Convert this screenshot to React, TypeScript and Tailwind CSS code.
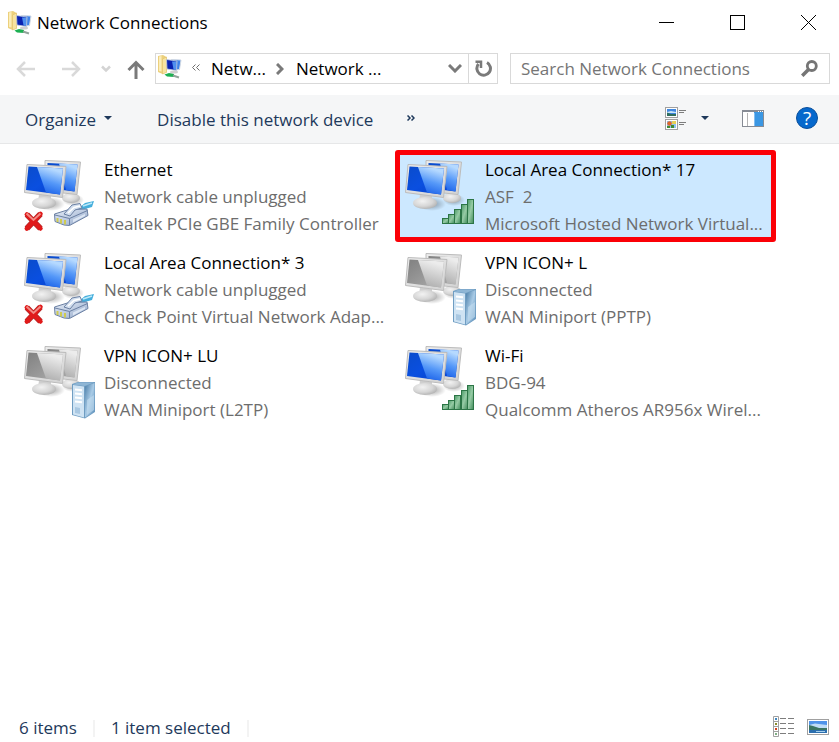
import React, { useState } from 'react';

type Badge = 'cable' | 'signal' | 'server';

interface Connection {
    name: string;
    status: string;
    device: string;
    badge: Badge;
}

const connections: Connection[] = [
    { name: 'Ethernet', status: 'Network cable unplugged', device: 'Realtek PCIe GBE Family Controller', badge: 'cable' },
    { name: 'Local Area Connection* 17', status: 'ASF  2', device: 'Microsoft Hosted Network Virtual...', badge: 'signal' },
    { name: 'Local Area Connection* 3', status: 'Network cable unplugged', device: 'Check Point Virtual Network Adap...', badge: 'cable' },
    { name: 'VPN ICON+ L', status: 'Disconnected', device: 'WAN Miniport (PPTP)', badge: 'server' },
    { name: 'VPN ICON+ LU', status: 'Disconnected', device: 'WAN Miniport (L2TP)', badge: 'server' },
    { name: 'Wi-Fi', status: 'BDG-94', device: 'Qualcomm Atheros AR956x Wirel...', badge: 'signal' },
];

// Gradients shared by every connection icon
function IconDefs() {
    return (
        <svg width="0" height="0" className="absolute" aria-hidden="true">
            <defs>
                <linearGradient id="blue-screen" x1="0" y1="0" x2="1" y2="1">
                    <stop offset="0" stopColor="#0a4ccb" />
                    <stop offset="0.5" stopColor="#0a4fe0" />
                    <stop offset="1" stopColor="#063fc8" />
                </linearGradient>
                <linearGradient id="blue-shine" x1="0.3" y1="0" x2="0" y2="1">
                    <stop offset="0" stopColor="#b5d9ff" />
                    <stop offset="0.45" stopColor="#5598f8" />
                    <stop offset="1" stopColor="#0d55e6" />
                </linearGradient>
                <linearGradient id="gray-screen" x1="0" y1="0" x2="1" y2="1">
                    <stop offset="0" stopColor="#808080" />
                    <stop offset="1" stopColor="#adadad" />
                </linearGradient>
                <linearGradient id="gray-shine" x1="0.3" y1="0" x2="0" y2="1">
                    <stop offset="0" stopColor="#ececec" />
                    <stop offset="1" stopColor="#a6a6a6" />
                </linearGradient>
                <linearGradient id="case" x1="0" y1="0" x2="1" y2="1">
                    <stop offset="0" stopColor="#ededed" />
                    <stop offset="1" stopColor="#d2d2d2" />
                </linearGradient>
                <radialGradient id="stand" cx="0.4" cy="0.35" r="0.7">
                    <stop offset="0" stopColor="#f2f2f2" />
                    <stop offset="0.6" stopColor="#d6d6d6" />
                    <stop offset="1" stopColor="#b0b0b0" />
                </radialGradient>
                <radialGradient id="shadow">
                    <stop offset="0" stopColor="#000" stopOpacity="0.35" />
                    <stop offset="1" stopColor="#000" stopOpacity="0" />
                </radialGradient>
                <linearGradient id="bar" x1="0" y1="0" x2="1" y2="1">
                    <stop offset="0" stopColor="#4c9a68" />
                    <stop offset="0.5" stopColor="#96cba5" />
                    <stop offset="1" stopColor="#3f8a59" />
                </linearGradient>
                <linearGradient id="server-side" x1="0" y1="0" x2="1" y2="1">
                    <stop offset="0" stopColor="#4b7ea8" />
                    <stop offset="0.5" stopColor="#a9cbe6" />
                    <stop offset="1" stopColor="#568bb7" />
                </linearGradient>
                <linearGradient id="plug" x1="0" y1="0" x2="1" y2="1">
                    <stop offset="0" stopColor="#e6edf7" />
                    <stop offset="1" stopColor="#93a8ca" />
                </linearGradient>
            </defs>
        </svg>
    );
}

function CableBadge() {
    return (
        <g>
            <path d="M56 50 L62 45 L71 43 L69 49 L62 51 L58 54 Z" fill="#45aedc" />
            <path d="M60 48 L69 45" stroke="#bde9f9" strokeWidth="1.5" />
            <path d="M31.500 56 L46 51.500 L64 51 L65 57.500 L46.500 67.500 L41 67 L32 63.500 Z" fill="url(#plug)" stroke="#6b80a3" strokeWidth="1" />
            <path d="M41 56 L49 47 L57 45.500 L59 50 L52 52 L47 58 Z" fill="#d3dfef" stroke="#6b80a3" strokeWidth="1" />
            <path d="M45 55 L51 49.500 L57 48" stroke="#fff" strokeWidth="1.5" />
            <path d="M46.500 60.500 L64.500 52.500 M46.500 60.500 V67 M32 57 L46.500 60.500" stroke="#6b80a3" strokeWidth="1" />
            <path d="M34.500 60 V64 M38 61 V65.500 M42 62 V66.500" stroke="#cfcb52" strokeWidth="2" />
            <path d="M50 61.500 L62 56 V58 L50 64.500 Z" fill="#dbe5f3" />
            <path d="M3.800 56.500 L17.500 70.500 M17.500 56 L3.800 70.500" stroke="#b52828" strokeWidth="6" />
            <path d="M3.800 56.500 L17.500 70.500 M17.500 56 L3.800 70.500" stroke="#e01a1a" strokeWidth="4.500" strokeLinecap="round" />
            <path d="M3.500 55.500 L10.500 62 L17.500 55.500" stroke="#f28a84" strokeWidth="2" />
        </g>
    );
}

function SignalBadge() {
    return (
        <g fill="url(#bar)" stroke="#2c7546" strokeWidth="1">
            <rect x="38.500" y="60.500" width="6" height="5" />
            <rect x="44.500" y="56.500" width="6" height="9" />
            <rect x="50.500" y="51.500" width="6" height="14" />
            <rect x="57.500" y="46.500" width="6" height="19" />
            <rect x="63.500" y="41.500" width="6" height="24" />
        </g>
    );
}

function ServerBadge() {
    return (
        <g>
            <path d="M49 40 L55 38 H72 V68 L62 74.500 L49 71 Z" fill="#6f9dc2" />
            <path d="M50 41 L61 42.500 V73.500 L50 70.500 Z" fill="#cfe3f3" />
            <path d="M62 42.500 L71.500 39 V67.500 L62 73.500 Z" fill="url(#server-side)" />
            <path d="M50 40.500 L55 38.500 H71 L61.500 42 Z" fill="#8fb6d5" />
            <path d="M52 45.500 L59 46.300 M52 49.500 L59 50.300 M52 53.500 L59 54.300 M52 57.500 L59 58.300" stroke="#fff" strokeWidth="2" />
            <path d="M52 63 L57 64 V70 L52 69 Z" fill="#a9c8e2" />
            <path d="M64 56 L71 51 V66 L64 71 Z" fill="#c5def0" opacity="0.6" />
        </g>
    );
}

function ConnectionIcon({ badge }: { badge: Badge }) {
    const off = badge === 'server';
    const screen = off ? 'url(#gray-screen)' : 'url(#blue-screen)';
    const shine = off ? 'url(#gray-shine)' : 'url(#blue-shine)';
    return (
        <svg viewBox="0 0 73 78" fill="none" className="mt-[3px] h-[78px] w-[73px] shrink-0" aria-hidden="true">
            <ellipse cx="50" cy="42" rx="11" ry="6" fill="url(#shadow)" />
            <ellipse cx="48" cy="40" rx="9" ry="5" fill="url(#stand)" />
            <path d="M22 2.500 L57.500 4 L54 36.500 L22 33 Z" fill="url(#case)" stroke="#bcbcbc" strokeWidth="1" />
            <path d="M24.500 5 L54.500 6.500 L51.500 33.500 L24 30 Z" fill={screen} />
            <path d="M36 5.500 L54.500 6.500 L51.500 33.500 L43 32 Z" fill={shine} />
            <ellipse cx="28" cy="46" rx="14" ry="7" fill="url(#shadow)" />
            <path d="M16 36 L28 38 L28 45 L15 45 Z" fill="#cfcfcf" />
            <ellipse cx="21" cy="45" rx="12" ry="6" fill="url(#stand)" />
            <path d="M4 6.500 L43 8.500 L39.500 39.500 L1.500 34.500 Z" fill="url(#case)" stroke="#bcbcbc" strokeWidth="1" />
            <path d="M5.500 8.500 L40 10.500 L37 36.500 L3 32 Z" fill={screen} />
            <path d="M14 9 L40 10.500 L37 36.500 L23 34.500 Z" fill={shine} />
            {badge === 'cable' && <CableBadge />}
            {badge === 'signal' && <SignalBadge />}
            {badge === 'server' && <ServerBadge />}
        </svg>
    );
}

function FolderIcon() {
    return (
        <svg viewBox="0 0 24 24" className="h-6 w-6 shrink-0" aria-hidden="true">
            <path d="M0 1 L5 0 L8.500 2 V17 L4.500 19 L0 17 Z" fill="#ecd07c" />
            <path d="M1 1.500 L3.500 1 V16.500 L1 16 Z" fill="#fbedb9" />
            <path d="M4.500 4 L8.500 2 V17.500 L4.500 19 Z" fill="#f7e3a0" stroke="#dfbf68" strokeWidth="0.600" />
            <path d="M13 4.500 L23 5 L21.500 14.500 L18 15 Z" fill="#3f82e8" stroke="#d3dae3" />
            <path d="M8.500 4.500 L19 6 L18.500 15.500 L9 14 Z" fill="#0a22b0" />
            <path d="M14 6.500 L19 6.500 L18.500 15 L15.500 14.500 Z" fill="#4f8fee" />
            <path d="M8.500 4.500 L19 6 L18.500 15.500 L9 14 Z" fill="none" stroke="#c9d3df" strokeWidth="0.800" />
            <ellipse cx="16" cy="17" rx="4" ry="1.500" fill="#d0d0d0" />
            <path d="M6.500 19.500 L11 18 L16 19 L16 22 L9 21.500 Z" fill="#1cb052" />
            <path d="M15 20.500 L21 22.500" stroke="#93a39b" strokeWidth="2" />
        </svg>
    );
}

function TitleBar() {
    return (
        <header className="flex h-[45px] items-center justify-between pl-2">
            <div className="flex items-center gap-[5px]">
                <FolderIcon />
                <h1 className="text-[17px] leading-6 text-black">Network Connections</h1>
            </div>
            <div className="flex gap-[9px]">
                <button type="button" aria-label="Minimize" className="flex h-[43px] w-[62px] items-center justify-center hover:bg-gray-200">
                    <svg viewBox="0 0 15 15" className="h-[15px] w-[15px]" stroke="#000"><path d="M0 7.500 H15" /></svg>
                </button>
                <button type="button" aria-label="Maximize" className="flex h-[43px] w-[62px] items-center justify-center hover:bg-gray-200">
                    <svg viewBox="0 0 15 15" className="h-[15px] w-[15px]" fill="none" stroke="#000"><rect x="0.500" y="0.500" width="14" height="14" /></svg>
                </button>
                <button type="button" aria-label="Close" className="flex h-[43px] w-[62px] items-center justify-center hover:bg-red-500">
                    <svg viewBox="0 0 15 15" className="h-[15px] w-[15px]" stroke="#000"><path d="M0 0 L15 15 M15 0 L0 15" /></svg>
                </button>
            </div>
        </header>
    );
}

function AddressRow() {
    const [query, setQuery] = useState('');
    return (
        <div className="flex h-[50px] items-start pt-2 pr-[9px]">
            <nav aria-label="History" className="flex h-[31px] w-[155px] shrink-0 items-center pt-px pl-4">
                <button type="button" aria-label="Back" className="mr-[27px]">
                    <svg viewBox="0 0 19 16" className="h-4 w-[19px]" fill="none" stroke="#d9d9d9" strokeWidth="2.500"><path d="M19 8 H2 M9 1 L2 8 L9 15" /></svg>
                </button>
                <button type="button" aria-label="Forward" className="mr-5">
                    <svg viewBox="0 0 19 16" className="h-4 w-[19px]" fill="none" stroke="#d9d9d9" strokeWidth="2.500"><path d="M0 8 H17 M10 1 L17 8 L10 15" /></svg>
                </button>
                <button type="button" aria-label="Recent locations" className="mr-4">
                    <svg viewBox="0 0 10 8" className="h-2 w-[10px]" fill="none" stroke="#d4d4d4" strokeWidth="2.500"><path d="M1 1.500 L5 5.500 L9 1.500" /></svg>
                </button>
                <button type="button" aria-label="Up">
                    <svg viewBox="0 0 18 19" className="h-[19px] w-[18px]" fill="none" stroke="#7a7a7a" strokeWidth="3"><path d="M9 19 V3 M1.500 10 L9 2.500 L16.500 10" /></svg>
                </button>
            </nav>
            <div className="flex h-[31px] flex-1 items-center border border-[#d9d9d9] text-[17px] text-black">
                <span className="ml-[2px] flex h-full items-start pt-px">
                    <FolderIcon />
                </span>
                <svg viewBox="0 0 8 7" className="mb-[3px] ml-[10px] h-[7px] w-2" fill="none" stroke="#6d6d6d"><path d="M3.500 0.500 L0.500 3.500 L3.500 6.500 M7.500 0.500 L4.500 3.500 L7.500 6.500" /></svg>
                <button type="button" className="ml-[11px]">Netw...</button>
                <svg viewBox="0 0 8 12" className="ml-[10px] h-3 w-2" fill="none" stroke="#7a7a7a" strokeWidth="3"><path d="M1 1 L6 6 L1 11" /></svg>
                <button type="button" className="ml-3">Network ...</button>
                <button type="button" aria-label="Previous locations" className="mr-[6px] ml-auto">
                    <svg viewBox="0 0 14 9" className="h-[9px] w-[14px]" fill="none" stroke="#7a7a7a" strokeWidth="3"><path d="M1 1 L7 7 L13 1" /></svg>
                </button>
                <button type="button" aria-label="Refresh" className="flex h-full w-[29px] items-center justify-center border-l border-[#d9d9d9]">
                    <svg viewBox="0 0 17 17" className="h-[17px] w-[17px]" fill="none" stroke="#7a7a7a" strokeWidth="3">
                        <path d="M12 2.500 A6.800 6.800 0 1 1 3.500 4" />
                        <path d="M0.500 1.800 H6 V8" strokeWidth="2.500" />
                    </svg>
                </button>
            </div>
            <div role="search" className="ml-3 flex h-[31px] w-[320px] shrink items-center border border-[#d9d9d9] pr-[11px] pl-[10px]">
                <input
                    type="text"
                    aria-label="Search Network Connections"
                    value={query}
                    onChange={(e) => setQuery(e.target.value)}
                    placeholder="Search Network Connections"
                    className="h-full min-w-0 flex-1 text-[17px] leading-7 outline-none placeholder:text-[#757575]"
                />
                <svg viewBox="0 0 17 17" className="h-[17px] w-[17px]" fill="none" stroke="#757575">
                    <circle cx="10.800" cy="6" r="4.500" strokeWidth="2.800" />
                    <path d="M7.500 9.500 L1.200 15.800" strokeWidth="3.500" />
                </svg>
            </div>
        </div>
    );
}

function Toolbar() {
    return (
        <div className="flex h-[49px] items-center border-b border-[#e6e7e8] bg-[#f5f6f7] pt-px pr-[21px] pl-[25px] text-[17px] text-[#1e395b]">
            <button type="button" className="flex items-center gap-2">
                Organize
                <svg viewBox="0 0 8 4" className="mb-1 h-1 w-2" fill="#1e395b"><path d="M0 0 H8 L4 4 Z" /></svg>
            </button>
            <button type="button" className="ml-[45px]">Disable this network device</button>
            <button type="button" aria-label="More commands" className="mb-1 ml-[34px]">
                <svg viewBox="0 0 8 6" className="h-[6px] w-2" fill="none" stroke="#1e395b" strokeWidth="1.500"><path d="M0.500 0.500 L3 3 L0.500 5.500 M4.500 0.500 L7 3 L4.500 5.500" /></svg>
            </button>
            <div className="ml-auto flex items-center pb-[3px]">
                <button type="button" aria-label="Change your view">
                    <svg viewBox="0 0 21 23" className="h-[23px] w-[21px]">
                        <rect x="0.500" y="0.500" width="12" height="10" fill="#fff" stroke="#a0a0a0" />
                        <rect x="2" y="2" width="9" height="7" fill="#3f87e0" />
                        <path d="M2 5 L6 4 L11 5 V6 H2 Z" fill="#c9e4f8" />
                        <path d="M2 5.500 L6 7 L11 7 V9 H2 Z" fill="#2f6d5c" />
                        <rect x="0.500" y="12.500" width="12" height="10" fill="#fff" stroke="#a0a0a0" />
                        <rect x="2" y="14" width="9" height="7" fill="#8fc1f0" />
                        <circle cx="4.500" cy="16.500" r="2.300" fill="#e0662a" />
                        <rect x="7" y="14" width="4" height="3" fill="#e7cf58" />
                        <path d="M2 19 H5 V21 H2 Z M6 18 H9 V21 H6 Z" fill="#3f8b34" />
                        <path d="M14 3.500 H21 M14 5.500 H19 M14 15.500 H21 M14 17.500 H19" stroke="#7d7d7d" />
                    </svg>
                </button>
                <button type="button" aria-label="More view options" className="ml-[15px]">
                    <svg viewBox="0 0 8 4" className="h-1 w-2" fill="#1e395b"><path d="M0 0 H8 L4 4 Z" /></svg>
                </button>
                <button type="button" aria-label="Show the preview pane" className="ml-[33px]">
                    <svg viewBox="0 0 22 17" className="h-[17px] w-[22px]">
                        <rect x="0.500" y="0.500" width="21" height="16" fill="#fff" stroke="#868b94" />
                        <path d="M0 1.500 H22" stroke="#868b94" />
                        <path d="M16 1.500 H21" stroke="#fff" strokeDasharray="1 1" />
                        <path d="M5.500 3 V16" stroke="#b4b4b4" />
                        <rect x="12" y="2" width="9" height="14" fill="#3b97e3" />
                        <path d="M12.500 3 V16" stroke="#83bdf0" />
                    </svg>
                </button>
                <button type="button" aria-label="Get help" className="ml-8 flex h-[22px] w-[22px] items-center justify-center rounded-full border border-[#0a4f9c] bg-[#0668cc] text-[19px] leading-none text-white">
                    ?
                </button>
            </div>
        </div>
    );
}

function StatusBar() {
    return (
        <footer className="flex h-[30px] items-center pt-[2px] pr-[10px] pl-[19px] text-[17px] text-[#1e395b]">
            <span>6 items</span>
            <span className="ml-4 h-[17px] w-[2px] bg-[#f3f3f3]" />
            <span className="ml-4">1 item selected</span>
            <span className="ml-4 h-[17px] w-[2px] bg-[#f3f3f3]" />
            <div className="ml-auto flex items-center gap-[13px] pb-[3px]">
                <button type="button" aria-label="Details view">
                    <svg viewBox="0 0 21 21" className="h-[21px] w-[21px]" fill="none">
                        <path d="M0.500 0.500 H5.500 V20.500 H0.500 Z M0.500 5.500 H5.500 M0.500 10.500 H5.500 M0.500 15.500 H5.500" stroke="#a0a0a0" />
                        <rect x="2" y="2" width="2" height="2" fill="#3f87c0" />
                        <rect x="2" y="7" width="2" height="2" fill="#8c8b2c" />
                        <rect x="2" y="12" width="2" height="2" fill="#d0401f" />
                        <rect x="2" y="17" width="2" height="2" fill="#7fae83" />
                        <path d="M7 2.500 H13 M15 2.500 H21 M7 7.500 H13 M15 7.500 H21 M7 12.500 H13 M15 12.500 H21 M7 17.500 H13 M15 17.500 H21" stroke="#7d7d7d" />
                    </svg>
                </button>
                <button type="button" aria-label="Large icons view">
                    <svg viewBox="0 0 22 16" className="h-4 w-[22px]">
                        <rect x="0.500" y="0.500" width="21" height="15" fill="#fff" stroke="#a0a0a0" />
                        <rect x="2" y="2" width="18" height="12" fill="#4f93ea" />
                        <path d="M2 6 L8 4.500 L20 6 V10 H2 Z" fill="#bfdcf7" />
                        <path d="M2 6 L6 7 L12 9 L20 9 V11 H2 Z" fill="#3b7563" />
                        <rect x="2" y="11" width="18" height="3" fill="#2d6fae" />
                        <path d="M9 12.500 H18" stroke="#a4cdea" />
                    </svg>
                </button>
            </div>
        </footer>
    );
}

export default function App() {
    const [selected, setSelected] = useState('Local Area Connection* 17');

    return (
        <div className="flex min-h-screen flex-col bg-white font-['Open_Sans','Noto_Sans',sans-serif]">
            <IconDefs />
            <TitleBar />
            <AddressRow />
            <Toolbar />
            <main className="grid flex-1 grid-cols-[repeat(auto-fill,381px)] content-start gap-y-px pt-[6px] pl-[14px]">
                {connections.map((item) => (
                    <button
                        key={item.name}
                        type="button"
                        onClick={() => setSelected(item.name)}
                        className={`flex h-[92px] items-start gap-2 rounded-[3px] border-[5px] px-1 text-left text-[17px] leading-[27px] ${
                            item.name === selected ? 'border-[#fb0007] bg-[#cce8ff]' : 'border-transparent'
                        }`}
                    >
                        <ConnectionIcon badge={item.badge} />
                        <span className="flex flex-col pt-px whitespace-pre text-[#6d6d6d]">
                            <span className="text-black">{item.name}</span>
                            <span>{item.status}</span>
                            <span>{item.device}</span>
                        </span>
                    </button>
                ))}
            </main>
            <StatusBar />
        </div>
    );
}
